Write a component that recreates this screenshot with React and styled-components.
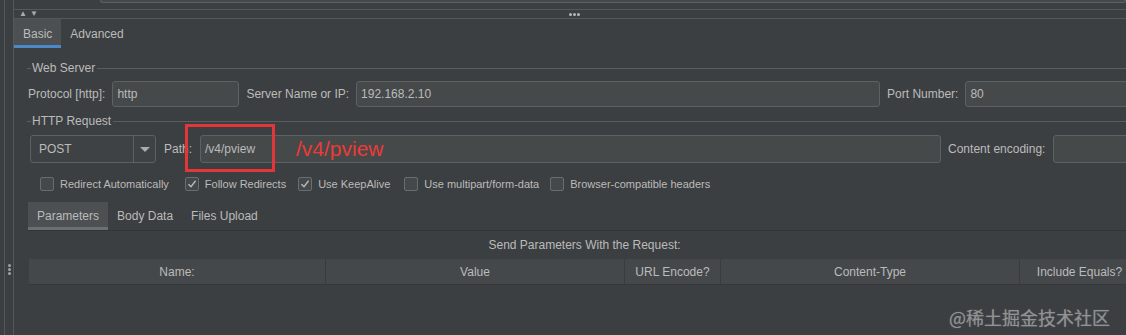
import styled, { createGlobalStyle } from "styled-components";

const GlobalStyle = createGlobalStyle`
  html, body {
    margin: 0;
    padding: 0;
    background: #3c3f41;
  }
  * {
    box-sizing: border-box;
  }
`;

const Screen = styled.div`
  display: flex;
  width: 1126px;
  height: 335px;
  overflow: hidden;
  position: relative;
  background: #3c3f41;
  color: #bbbbbb;
  font-family: "Liberation Sans", Arial, sans-serif;
  font-size: 12px;
`;

const Rail = styled.div`
  display: flex;
  flex: none;
`;

const Gutter = styled.div`
  width: 5px;
  border-right: 1px solid #55585a;
`;

const Grip = styled.div`
  width: 9px;
  border-right: 1px solid #55585a;
  display: flex;
  flex-direction: column;
  align-items: center;
  gap: 1px;
  padding-top: 264px;
`;

const GripDot = styled.span`
  width: 3px;
  height: 3px;
  border-radius: 50%;
  background: #a0a3a5;
`;

const Main = styled.div`
  flex: 1;
  display: flex;
  flex-direction: column;
  min-width: 0;
`;

const TopStrip = styled.div`
  height: 10px;
  border-bottom: 1px solid #55585a;
  padding-left: 86px;
`;

const FieldEdge = styled.div`
  height: 3px;
  border: 1px solid #5e6162;
  border-top: none;
  border-radius: 0 0 3px 3px;
  background: #45494a;
`;

const Splitter = styled.div`
  height: 9px;
  border-bottom: 1px solid #55585a;
  display: flex;
  align-items: center;
  padding-left: 5px;
`;

const Arrows = styled.div`
  display: flex;
  gap: 3px;
  color: #a9abad;
  font-size: 8px;
  line-height: 1;
`;

const SplitDots = styled.div`
  display: flex;
  gap: 1px;
  margin-left: 531px;
`;

const SmallDot = styled.span`
  width: 3px;
  height: 3px;
  border-radius: 50%;
  background: #b4b6b8;
`;

const TabBar = styled.div`
  display: flex;
  height: 29px;
  border-bottom: ${(p) => (p.$line ? "1px solid #323436" : "none")};
`;

const Tab = styled.div`
  display: flex;
  align-items: center;
  padding: 3px ${(p) => p.$pad || 9}px 0;
  height: 100%;
  color: #bbbbbb;
  background: ${(p) => (p.$active ? "#4c5052" : "transparent")};
  border-bottom: 3px solid ${(p) => (p.$active ? p.$accent : "transparent")};
`;

const Content = styled.div`
  display: flex;
  flex-direction: column;
  padding-left: 13px;
`;

const GroupTitle = styled.div`
  display: flex;
  align-items: center;
  height: 14px;
  margin-top: ${(p) => p.$top}px;
  color: #bbbbbb;

  &::before {
    content: "";
    width: 4px;
    border-top: 1px solid #5b5e60;
  }
  &::after {
    content: "";
    flex: 1;
    border-top: 1px solid #5b5e60;
  }
`;

const GroupText = styled.span`
  padding: 0 2px 0 1px;
`;

const Row = styled.div`
  display: flex;
  align-items: center;
  margin-top: ${(p) => p.$top}px;
  height: ${(p) => p.$h}px;
  position: relative;
`;

const Label = styled.span`
  flex: none;
  white-space: nowrap;
  margin: 0 ${(p) => p.$right || 7}px 0 ${(p) => p.$left || 0}px;
`;

const Field = styled.div`
  flex: none;
  width: ${(p) => p.$w}px;
  height: 100%;
  display: flex;
  align-items: center;
  padding-left: 4px;
  border: 1px solid #5e6162;
  border-radius: 3px;
  background: #45494a;
  color: #bbbbbb;
  margin-right: 7px;
`;

const Combo = styled.div`
  flex: none;
  display: flex;
  width: 126px;
  height: 100%;
  margin-left: 3px;
  margin-right: 8px;
  border: 1px solid #5e6162;
  border-radius: 3px;
  background: #3f4244;
`;

const ComboValue = styled.div`
  flex: 1;
  display: flex;
  align-items: center;
  padding-left: 8px;
`;

const ComboArrow = styled.div`
  width: 22px;
  border-left: 1px solid #5e6162;
  display: flex;
  align-items: center;
  justify-content: center;

  &::after {
    content: "";
    border-left: 5px solid transparent;
    border-right: 5px solid transparent;
    border-top: 5px solid #a9abad;
  }
`;

const Highlight = styled.div`
  position: absolute;
  left: 158px;
  top: -11px;
  width: 90px;
  height: 48px;
  border: 3px solid #e2363a;
`;

const Annotation = styled.div`
  position: absolute;
  left: 269px;
  top: 0;
  height: 100%;
  display: flex;
  align-items: center;
  color: #ee3a36;
  font-size: 21px;
`;

const Checks = styled.div`
  display: flex;
  align-items: center;
  height: 16px;
  margin-top: 13px;
  padding-left: 13px;
  font-size: 11px;
`;

const CheckItem = styled.label`
  display: flex;
  align-items: center;
  gap: 6px;
  margin-right: ${(p) => p.$gap}px;
  white-space: nowrap;
`;

const Box = styled.span`
  width: 14px;
  height: 14px;
  border: 1px solid #6a6d6f;
  border-radius: 2px;
  background: #43484a;
  display: flex;
  align-items: center;
  justify-content: center;
`;

const SubTabs = styled(TabBar)`
  margin-top: 10px;
  margin-left: 1px;
`;

const Caption = styled.div`
  height: 14px;
  margin-top: 7px;
  text-align: center;
  line-height: 14px;
  padding-left: 16px;
`;

const Table = styled.div`
  display: flex;
  margin-top: 7px;
  margin-left: 2px;
  height: 25px;
  box-shadow: 0 1px 0 #36383a;
`;

const HeadCell = styled.div`
  flex: none;
  width: ${(p) => p.$w}px;
  display: flex;
  align-items: center;
  justify-content: center;
  background: #45484a;
  border-right: 1px solid #393b3d;
  color: #bbbbbb;
`;

const Watermark = styled.div`
  position: absolute;
  right: 16px;
  bottom: 5px;
  font-family: "Noto Sans CJK SC", "Liberation Sans", sans-serif;
  font-size: 18px;
  color: rgba(150, 152, 154, 0.85);
  text-shadow: 0 0 1px rgba(220, 220, 220, 0.4);
`;

const Tick = () => (
  <svg width="10" height="10" viewBox="0 0 10 10">
    <path d="M1.5 5.2 L4 7.8 L8.6 1.8" fill="none" stroke="#b8babc" strokeWidth="1.4" />
  </svg>
);

const checks = [
  { label: "Redirect Automatically", on: false, gap: 16 },
  { label: "Follow Redirects", on: true, gap: 12 },
  { label: "Use KeepAlive", on: true, gap: 14 },
  { label: "Use multipart/form-data", on: false, gap: 11 },
  { label: "Browser-compatible headers", on: false, gap: 0 },
];

const columns = [
  { name: "Name:", w: 297 },
  { name: "Value", w: 299 },
  { name: "URL Encode?", w: 96 },
  { name: "Content-Type", w: 299 },
  { name: "Include Equals?", w: 120 },
];

export default function App() {
  return (
    <Screen>
      <GlobalStyle />
      <Rail>
        <Gutter />
        <Grip>
          <GripDot />
          <GripDot />
          <GripDot />
        </Grip>
      </Rail>
      <Main>
        <TopStrip>
          <FieldEdge />
        </TopStrip>
        <Splitter>
          <Arrows>
            <span>▲</span>
            <span>▼</span>
          </Arrows>
          <SplitDots>
            <SmallDot />
            <SmallDot />
            <SmallDot />
          </SplitDots>
        </Splitter>
        <TabBar>
          <Tab $active $accent="#4a88c7">Basic</Tab>
          <Tab>Advanced</Tab>
        </TabBar>
        <Content>
          <GroupTitle $top={13}>
            <GroupText>Web Server</GroupText>
          </GroupTitle>
          <Row $top={6} $h={26}>
            <Label $left={1}>Protocol [http]:</Label>
            <Field $w={127}>http</Field>
            <Label>Server Name or IP:</Label>
            <Field $w={524}>192.168.2.10</Field>
            <Label>Port Number:</Label>
            <Field $w={200}>80</Field>
          </Row>
          <GroupTitle $top={7}>
            <GroupText>HTTP Request</GroupText>
          </GroupTitle>
          <Row $top={7} $h={28}>
            <Combo>
              <ComboValue>POST</ComboValue>
              <ComboArrow />
            </Combo>
            <Label $right={8}>Path:</Label>
            <Field $w={741}>/v4/pview</Field>
            <Label $right={8}>Content encoding:</Label>
            <Field $w={120} />
            <Highlight />
            <Annotation>/v4/pview</Annotation>
          </Row>
          <Checks>
            {checks.map((c) => (
              <CheckItem key={c.label} $gap={c.gap}>
                <Box>{c.on && <Tick />}</Box>
                {c.label}
              </CheckItem>
            ))}
          </Checks>
          <SubTabs $line>
            <Tab $active $accent="#6b6f72">Parameters</Tab>
            <Tab>Body Data</Tab>
            <Tab>Files Upload</Tab>
          </SubTabs>
          <Caption>Send Parameters With the Request:</Caption>
          <Table>
            {columns.map((c) => (
              <HeadCell key={c.name} $w={c.w}>
                {c.name}
              </HeadCell>
            ))}
          </Table>
        </Content>
      </Main>
      <Watermark>@稀土掘金技术社区</Watermark>
    </Screen>
  );
}
